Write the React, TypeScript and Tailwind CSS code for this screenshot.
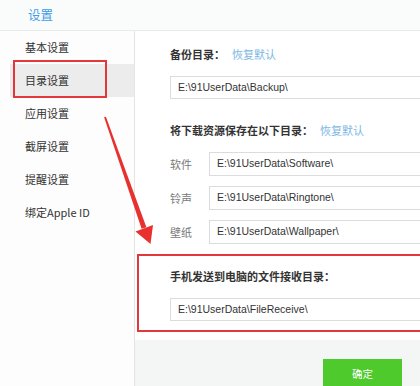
import React from 'react'

const navItems = ['基本设置', '目录设置', '应用设置', '截屏设置', '提醒设置', '绑定Apple ID']

const cjk = { fontFamily: '"Noto Sans CJK SC", "Liberation Sans", sans-serif' }
const latin = { fontFamily: '"Liberation Sans", "Noto Sans CJK SC", sans-serif' }

function PathBox({ value, className = '' }: { value: string; className?: string }) {
  return (
    <div
      className={`h-[23px] w-[300px] shrink-0 border border-[#dcdcdc] bg-white pl-[7px] flex items-center text-[10.5px] text-[#333] ${className}`}
      style={latin}
    >
      {value}
    </div>
  )
}

function RestoreLink() {
  return <span className="ml-[7px] font-normal text-[#7ab7e4]">恢复默认</span>
}

function DirRow({ label, value }: { label: string; value: string }) {
  return (
    <div className="flex items-center">
      <span className="w-[39px] shrink-0 text-[11px] text-[#7a7a7a]">{label}</span>
      <PathBox value={value} className="h-[24px]" />
    </div>
  )
}

export default function App() {
  return (
    <div className="relative w-[420px] h-[386px] overflow-hidden bg-white flex flex-col" style={cjk}>
      {/* title bar */}
      <div className="h-[31px] shrink-0 bg-[#fafbfb] border-b border-[#e9ebeb] flex items-center pl-[28px]">
        <span className="text-[12.5px] text-[#3d9de6]">设置</span>
      </div>

      <div className="flex flex-1 min-h-0">
        {/* sidebar */}
        <div className="w-[135px] shrink-0 bg-[#fdfdfd] border-r border-[#e4e4e4]">
          {navItems.map((item, i) => (
            <div
              key={item}
              className={`h-[33px] flex items-center text-[11px] text-[#333] ${
                i === 1 ? 'ml-[10px] pl-[15px] bg-[#ececec]' : 'pl-[25px]'
              }`}
            >
              {item}
            </div>
          ))}
        </div>

        {/* main */}
        <div className="flex-1 min-w-0 flex flex-col">
          <div className="flex-1 pl-[35px] overflow-hidden">
            <div className="mt-[15px] h-[16px] flex items-center text-[11px] font-bold text-[#333]">
              备份目录：<RestoreLink />
            </div>
            <PathBox value="E:\91UserData\Backup\" className="mt-[14px]" />

            <div className="mt-[23px] h-[16px] flex items-center text-[11px] font-bold text-[#333]">
              将下载资源保存在以下目录：<RestoreLink />
            </div>
            <div className="mt-[14px] flex flex-col gap-[10px]">
              <DirRow label="软件" value="E:\91UserData\Software\" />
              <DirRow label="铃声" value="E:\91UserData\Ringtone\" />
              <DirRow label="壁纸" value="E:\91UserData\Wallpaper\" />
            </div>

            <div className="mt-[24px] h-[16px] flex items-center text-[11px] font-bold text-[#333]">
              手机发送到电脑的文件接收目录：
            </div>
            <PathBox value="E:\91UserData\FileReceive\" className="mt-[14px]" />
          </div>

          {/* footer */}
          <div className="h-[46px] shrink-0 bg-[#f4f5f5] flex justify-end items-start pr-[18px] pt-[19px]">
            <button className="w-[79px] h-[30px] bg-[#4fca2c] text-white text-[10.5px] flex items-center justify-center">
              确定
            </button>
          </div>
        </div>
      </div>

      {/* annotation boxes */}
      <div className="absolute left-[13px] top-[60px] w-[94px] h-[38px] border-2 border-[#e2383c] pointer-events-none" />
      <div className="absolute left-[137px] top-[254px] w-[300px] h-[78px] border-2 border-[#e2383c] pointer-events-none" />

      {/* annotation arrow */}
      <svg className="absolute inset-0 pointer-events-none" width="420" height="386" viewBox="0 0 420 386">
        <polygon points="105.9,116.7 104.1,117.3 141.6,228.8 146.4,227.2" fill="#e8302e" />
        <polygon points="135.5,231.5 153,225 150.5,244" fill="#e8302e" />
      </svg>
    </div>
  )
}
